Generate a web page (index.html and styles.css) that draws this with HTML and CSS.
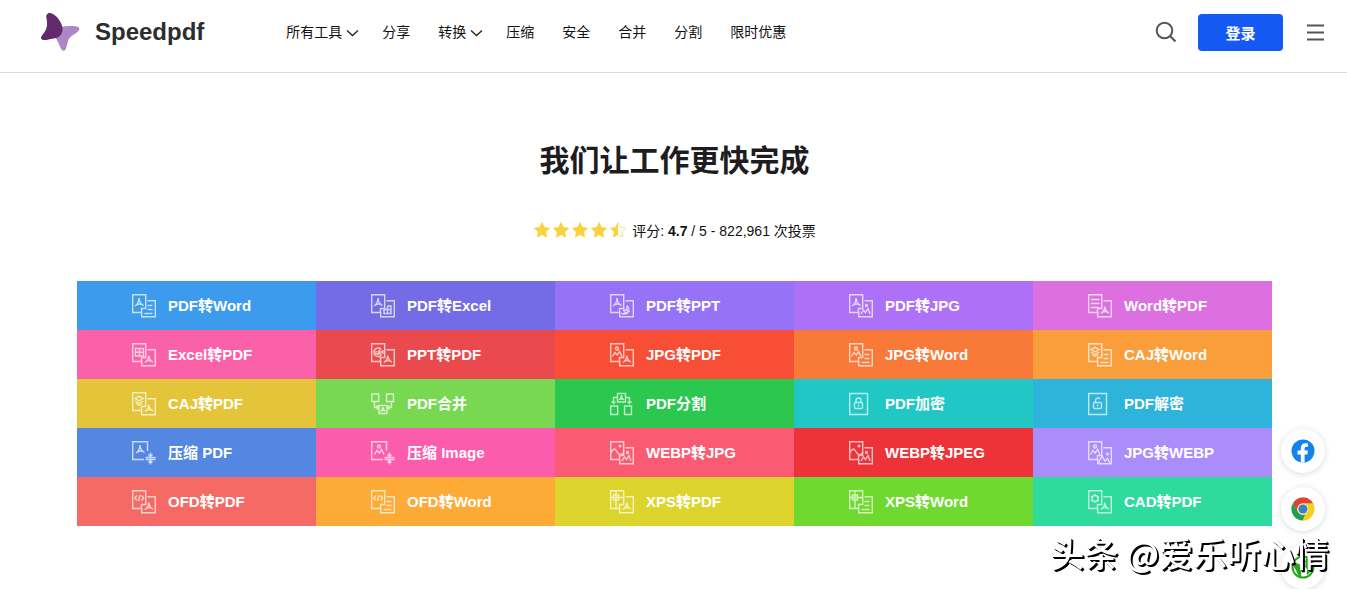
FILE: index.html
```html
<!DOCTYPE html>
<html lang="zh-CN">
<head>
  <meta charset="UTF-8">
  <meta name="viewport" content="width=device-width, initial-scale=1.0">
  <title>Speedpdf</title>
  <link rel="stylesheet" href="styles.css">
</head>
<body>

  <!-- Icon parts shared by the tool tiles -->
  <svg class="sprite" aria-hidden="true">
    <symbol id="front" viewBox="0 0 24 24"><path d="M9 18.500H.7V.7h13V6.500M13.700 6v8.500H9.500v4"/></symbol>
    <symbol id="back" viewBox="0 0 24 24"><path d="M15.500 6.700h7.800v16H9.700v-5"/></symbol>
    <symbol id="pdf-front" viewBox="0 0 24 24"><path d="M7 4C6.800 7.500 5.500 10.500 3 12M7 4c.4 3.500 2 6.500 4.500 7.500M4.500 11c1.800-1.200 4-1.300 6-.5"/></symbol>
    <symbol id="pdf-back" viewBox="0 0 24 24"><path d="M16.800 12.500c-.2 3-1.600 5.500-4 7M16.800 12.500c.4 3 1.800 5.500 4 6.500M14 18.300c1.800-1 4-1 5.500-.3"/></symbol>
    <symbol id="doc-front" viewBox="0 0 24 24"><path d="M3 5.500h8.500M3 9.500h8.500M3 13.500h8.500"/></symbol>
    <symbol id="doc-back" viewBox="0 0 24 24"><path d="M15.500 11.500h5M15.500 15.500h5M12.500 19.500h8"/></symbol>
    <symbol id="xls-front" viewBox="0 0 24 24"><path d="M3.500 5.500h8v7.500h-8zM7.500 5.500V13M3.500 9.300h8"/></symbol>
    <symbol id="xls-back" viewBox="0 0 24 24"><path d="M16.500 12h3.500v7.500h-7v-4h7M16.500 12v7.500"/></symbol>
    <symbol id="ppt-front" viewBox="0 0 24 24"><path d="M10 6a4.300 4.300 0 1 0 .5 6M10.500 12 7 9l3-3M8 9h4M5.500 8a1.800 1.800 0 1 0 2.500 2.500M12 7v4"/></symbol>
    <symbol id="ppt-back" viewBox="0 0 24 24"><path d="M17 11.500a4.500 4.500 0 1 1-6 7.500M17 12v4h-4M17 16l3 2M13 19.500h5M14 16.500c0 2 2 3 4 1"/></symbol>
    <symbol id="img-front" viewBox="0 0 24 24"><circle cx="7" cy="5.500" r="1.500"/><path d="M2.500 13.500 5 9.500l2.300 2.500 2.200-3.500 2.500 5"/></symbol>
    <symbol id="img-back" viewBox="0 0 24 24"><circle cx="17.500" cy="11.500" r="1"/><path d="m12 20 2.500-4 2 2.500 2.500-4 2 5.500"/></symbol>
    <symbol id="webp-front" viewBox="0 0 24 24"><circle cx="10" cy="5" r=".8"/><path d="M.5 13c2-5 4-6.500 6-3s4 5 7 2"/></symbol>
    <symbol id="webp-back" viewBox="0 0 24 24"><circle cx="19.500" cy="13" r=".8"/><path d="m10.500 22 3.500-7 3 5 2.500-2.500 2.500 4.500"/></symbol>
    <symbol id="caj-front" viewBox="0 0 24 24"><path d="m3 6.500 4-2.200 4.200 2.200L7 8.800zM3 9l4 2.300L11.200 9M4 11.500l3 1.800 3.500-1.800"/></symbol>
    <symbol id="ofd-front" viewBox="0 0 24 24"><path d="M5 5.500 2.800 8 5 10.500M9.500 5.500 11.700 8l-2.200 2.500M8 5l-1.500 6"/></symbol>
    <symbol id="xps-front" viewBox="0 0 24 24"><path d="M6 .5v18M.5 7.500h13M3.500 5h5v5h-5z"/></symbol>
    <symbol id="cad-front" viewBox="0 0 24 24"><circle cx="7" cy="8.500" r="3"/><path d="M7 4v2M7 11v2M3 6.300l2 1M9 9.800l2 1M3 10.800l2-1M9 7.300l2-1"/></symbol>
    <symbol id="compress" viewBox="0 0 24 24"><path d="M15.500 10V.7H.7v17.800H12M13.500 16.500h10M13.500 18.500h10M18.500 11.500v4M16.500 13.500l2 2 2-2M18.500 23.500v-4M16.500 21.500l2-2 2 2"/></symbol>
    <symbol id="merge" viewBox="0 0 24 24"><path d="M.7 2h7v7.500h-7zM15.500 2h7v7.500h-7zM8 13.500h8v8H8zM3.500 10v5.500H7M5.500 13.500l2 2-2 2M20.500 10v5.500H17M18.500 13.500l-2 2 2 2M12 15c0 2-1 3.500-2.500 4.500M12 15c0 2 1 3.500 2.500 4.500M10.500 18.500h3"/></symbol>
    <symbol id="split" viewBox="0 0 24 24"><path d="M7.500 1.500h8V10h-8zM.7 14h7v8.500h-7zM14.500 14h7v8.500h-7zM7 5.500H3.500V12M1.500 9.500l2 2 2-2M16 5.500h3.500V12M17.500 9.500l2 2 2-2M11.500 3c0 2-1 4-2.500 5M11.500 3c0 2 1 4 2.500 5M10 7h3"/></symbol>
    <symbol id="lock" viewBox="0 0 24 24"><path d="M.7 1.500h17.800v21H.7z"/><rect x="5.500" y="10.500" width="8" height="6" rx="1"/><path d="M7 10.500V8.500a2.500 2.500 0 0 1 5 0v2M9.500 12.500v2"/></symbol>
    <symbol id="unlock" viewBox="0 0 24 24"><path d="M.7 1.500h17.800v21H.7z"/><rect x="5.500" y="10.500" width="8" height="6" rx="1"/><path d="M7.500 10.500v-2A2.500 2.500 0 0 1 12 7M9.500 12.500v2"/></symbol>
    <symbol id="star" viewBox="0 0 18 18"><path d="m9 .8 2.500 5.300 5.800.8-4.200 4.100 1 5.800L9 14l-5.100 2.800 1-5.800L.7 6.900l5.800-.8z"/></symbol>
    <symbol id="chevron" viewBox="0 0 13 8"><path d="m1 1.500 5.500 5 5.500-5"/></symbol>
  </svg>

  <header class="header">
    <a class="logo" href="#">
      <svg class="logo-mark" viewBox="0 0 40 40" aria-hidden="true">
        <path fill="#ae86c6" d="M15 17c5-3 15-3.500 21.500-2.500 3.500.7 3.500 3 1.500 5-4 3.500-8.500 4.500-10 9.500l-2 7.500c-1 3-3.500 3-5 0C19 33 17.500 28 15 25z"/>
        <path fill="#612a6b" d="M6.500 3c1.500-3 5-2.500 8 0 5 4 8.500 10 8 15.500-.5 4.500-4 7.500-9 8-4.500.5-7 2-10 1.500-3-.5-3-2.500-1.500-4.500 4-5 5.500-8 5-14C6.800 7 5.800 4.500 6.500 3z"/>
      </svg>
      <span>Speedpdf</span>
    </a>
    <nav class="nav">
      <a href="#">所有工具<svg class="chevron"><use href="#chevron"/></svg></a>
      <a href="#">分享</a>
      <a href="#">转换<svg class="chevron"><use href="#chevron"/></svg></a>
      <a href="#">压缩</a>
      <a href="#">安全</a>
      <a href="#">合并</a>
      <a href="#">分割</a>
      <a href="#">限时优惠</a>
    </nav>
    <div class="actions">
      <button class="icon-btn" aria-label="搜索">
        <svg width="22" height="22" viewBox="0 0 22 22"><circle cx="9.500" cy="9.500" r="7.800"/><path d="m15.200 15.200 5.300 5.300"/></svg>
      </button>
      <button class="login">登录</button>
      <button class="icon-btn" aria-label="菜单">
        <svg width="17" height="17" viewBox="0 0 17 17"><path d="M0 1.500h17M0 8.500h17M0 15.500h17"/></svg>
      </button>
    </div>
  </header>

  <main class="main">
    <h1>我们让工作更快完成</h1>

    <div class="rating">
      <span class="stars">
        <svg><use href="#star"/></svg>
        <svg><use href="#star"/></svg>
        <svg><use href="#star"/></svg>
        <svg><use href="#star"/></svg>
        <svg viewBox="0 0 18 18"><path d="M9 .8V14l-5.100 2.800 1-5.800L.7 6.900l5.800-.8z"/><path class="half" d="m9.500 2 2 4.300 5 .8-3.700 3.800.8 5L9.500 14"/></svg>
      </span>
      <span>评分: <strong>4.7</strong> / 5 - 822,961 次投票</span>
    </div>

    <div class="tools">
      <a class="tool blue" href="#"><svg><use href="#front"/><use href="#back"/><use href="#pdf-front"/><use href="#doc-back"/></svg>PDF转Word</a>
      <a class="tool indigo" href="#"><svg><use href="#front"/><use href="#back"/><use href="#pdf-front"/><use href="#xls-back"/></svg>PDF转Excel</a>
      <a class="tool violet" href="#"><svg><use href="#front"/><use href="#back"/><use href="#pdf-front"/><use href="#ppt-back"/></svg>PDF转PPT</a>
      <a class="tool purple" href="#"><svg><use href="#front"/><use href="#back"/><use href="#pdf-front"/><use href="#img-back"/></svg>PDF转JPG</a>
      <a class="tool orchid" href="#"><svg><use href="#front"/><use href="#back"/><use href="#doc-front"/><use href="#pdf-back"/></svg>Word转PDF</a>

      <a class="tool pink" href="#"><svg><use href="#front"/><use href="#back"/><use href="#xls-front"/><use href="#pdf-back"/></svg>Excel转PDF</a>
      <a class="tool crimson" href="#"><svg><use href="#front"/><use href="#back"/><use href="#ppt-front"/><use href="#pdf-back"/></svg>PPT转PDF</a>
      <a class="tool vermilion" href="#"><svg><use href="#front"/><use href="#back"/><use href="#img-front"/><use href="#pdf-back"/></svg>JPG转PDF</a>
      <a class="tool orange" href="#"><svg><use href="#front"/><use href="#back"/><use href="#img-front"/><use href="#doc-back"/></svg>JPG转Word</a>
      <a class="tool apricot" href="#"><svg><use href="#front"/><use href="#back"/><use href="#caj-front"/><use href="#doc-back"/></svg>CAJ转Word</a>

      <a class="tool mustard" href="#"><svg><use href="#front"/><use href="#back"/><use href="#caj-front"/><use href="#pdf-back"/></svg>CAJ转PDF</a>
      <a class="tool light-green" href="#"><svg><use href="#merge"/></svg>PDF合并</a>
      <a class="tool green" href="#"><svg><use href="#split"/></svg>PDF分割</a>
      <a class="tool teal" href="#"><svg><use href="#lock"/></svg>PDF加密</a>
      <a class="tool sky" href="#"><svg><use href="#unlock"/></svg>PDF解密</a>

      <a class="tool steel" href="#"><svg><use href="#compress"/><use href="#pdf-front" x="1"/></svg>压缩 PDF</a>
      <a class="tool hot-pink" href="#"><svg><use href="#compress"/><use href="#img-front" x="1"/></svg>压缩 Image</a>
      <a class="tool rose" href="#"><svg><use href="#front"/><use href="#back"/><use href="#webp-front"/><use href="#img-back"/></svg>WEBP转JPG</a>
      <a class="tool red" href="#"><svg><use href="#front"/><use href="#back"/><use href="#webp-front"/><use href="#img-back"/></svg>WEBP转JPEG</a>
      <a class="tool lavender" href="#"><svg><use href="#front"/><use href="#back"/><use href="#img-front"/><use href="#webp-back"/></svg>JPG转WEBP</a>

      <a class="tool coral" href="#"><svg><use href="#front"/><use href="#back"/><use href="#ofd-front"/><use href="#pdf-back"/></svg>OFD转PDF</a>
      <a class="tool amber" href="#"><svg><use href="#front"/><use href="#back"/><use href="#ofd-front"/><use href="#doc-back"/></svg>OFD转Word</a>
      <a class="tool yellow" href="#"><svg><use href="#front"/><use href="#back"/><use href="#xps-front"/><use href="#pdf-back"/></svg>XPS转PDF</a>
      <a class="tool lime" href="#"><svg><use href="#front"/><use href="#back"/><use href="#xps-front"/><use href="#doc-back"/></svg>XPS转Word</a>
      <a class="tool mint" href="#"><svg><use href="#front"/><use href="#back"/><use href="#cad-front"/><use href="#pdf-back"/></svg>CAD转PDF</a>
    </div>
  </main>

  <!-- Floating share buttons -->
  <div class="share">
    <a href="#" aria-label="Facebook">
      <svg viewBox="0 0 24 24"><circle cx="12" cy="12" r="11.500" fill="#1383ea"/><path fill="#fff" d="M9.800 23.500v-8H6.500V11.500h3.300V9.300C9.800 6 11.600 4.200 14.500 4.200c1.200 0 2.400.2 2.400.2v3.300h-1.400c-1.500 0-1.900.9-1.900 1.900v1.900h3.400l-.6 4h-2.800v8z"/></svg>
    </a>
    <a href="#" aria-label="Chrome">
      <svg viewBox="0 0 24 24"><circle cx="12" cy="12" r="11.500" fill="#f9cf1e"/><path fill="#dc4437" d="M2 6.200A11.500 11.500 0 0 1 22 6.200H12a6 6 0 0 0-5.200 8.800z"/><path fill="#1d9d59" d="M2 6.200 6.800 15A6 6 0 0 0 14 17.700L11.500 23.500A11.500 11.500 0 0 1 2 6.200z"/><circle cx="12" cy="12" r="5.500" fill="#e8eef4"/><circle cx="12" cy="12" r="4.600" fill="#4180bd"/></svg>
    </a>
    <a href="#" aria-label="Web">
      <svg viewBox="0 0 24 24"><circle cx="12" cy="12" r="10.500" fill="#fff" stroke="#25a61c" stroke-width="2"/><path fill="#25a61c" d="M2 8c3-1 5 1 8 2 3 1 3 3 1 5s0 4-1 7c-3-1-4-4-5-7-1-2-3-3-3-7zM15 3c3 0 6 4 7 8-1 4-3 7-6 9-1-3 1-5-1-7-2-3 1-4-1-6z"/></svg>
    </a>
  </div>

  <div class="watermark">头条 @爱乐听心情</div>

</body>
</html>
```

FILE: styles.css
```css
* {
  box-sizing: border-box;
}

body {
  margin: 0;
  font-family: "Liberation Sans", "Noto Sans CJK SC", sans-serif;
  font-size: 14px;
  color: #111;
  background-color: #fff;
}

a {
  color: inherit;
  text-decoration: none;
}

button {
  font-family: inherit;
  border: none;
  cursor: pointer;
}

.sprite {
  display: none;
}

/* Header */
.header {
  display: flex;
  align-items: center;
  height: 73px;
  padding: 0 23px 8px 40px;
  border-bottom: 1px solid #dcdcdc;
}

.logo {
  display: flex;
  align-items: center;
  gap: 15px;
  font-size: 24px;
  font-weight: bold;
  color: #2d2d2d;
}

.logo-mark {
  width: 40px;
  height: 40px;
}

.nav {
  display: flex;
  gap: 28px;
  margin-left: 82px;
  padding-bottom: 2px;
}

.nav a {
  white-space: nowrap;
}

.chevron {
  width: 13px;
  height: 8px;
  margin: 0 -5px 0 4px;
  fill: none;
  stroke: #222;
  stroke-width: 1.3;
}

.actions {
  display: flex;
  align-items: center;
  margin-left: auto;
}

.icon-btn {
  display: flex;
  padding: 0;
  background: none;
}

.icon-btn svg {
  fill: none;
  stroke: #555;
  stroke-width: 2;
}

.login {
  width: 85px;
  height: 37px;
  margin: 0 24px 0 21px;
  font-size: 15px;
  font-weight: bold;
  color: #fff;
  background-color: #145af2;
  border-radius: 4px;
}

/* Main */
.main {
  padding: 64px 75px 60px 77px;
}

h1 {
  margin: 0;
  font-size: 30px;
  line-height: 48px;
  text-align: center;
  color: #1d1d1f;
}

.rating {
  display: flex;
  align-items: center;
  justify-content: center;
  gap: 5px;
  height: 24px;
  margin: 33px 0 39px;
}

.stars {
  display: flex;
  gap: 1px;
}

.stars svg {
  width: 18px;
  height: 18px;
  fill: #f7d33f;
}

.stars .half {
  fill: none;
  stroke: #f9e08a;
}

.tools {
  display: grid;
  grid-template-columns: repeat(5, 1fr);
}

.tool {
  display: flex;
  align-items: center;
  gap: 12px;
  height: 49px;
  padding: 0 0 2px 55px;
  font-size: 15px;
  font-weight: bold;
  color: #fff;
  white-space: nowrap;
}

.tool svg {
  width: 24px;
  height: 24px;
  margin-top: 3px;
  fill: none;
  stroke: #fff;
  stroke-width: 1.4;
  opacity: 0.7;
}

.blue { background-color: #3d9bed; }
.indigo { background-color: #746ce6; }
.violet { background-color: #9672f7; }
.purple { background-color: #ad71f7; }
.orchid { background-color: #dc70e0; }
.pink { background-color: #fb61a8; }
.crimson { background-color: #ea4a4d; }
.vermilion { background-color: #f84e35; }
.orange { background-color: #f97938; }
.apricot { background-color: #fa9e3c; }
.mustard { background-color: #e4c53a; }
.light-green { background-color: #78d852; }
.green { background-color: #2bc74f; }
.teal { background-color: #20c7c5; }
.sky { background-color: #2eb4da; }
.steel { background-color: #5487e1; }
.hot-pink { background-color: #fb5cab; }
.rose { background-color: #fa5b73; }
.red { background-color: #ed3338; }
.lavender { background-color: #ab8cfb; }
.coral { background-color: #f56a64; }
.amber { background-color: #fdaa36; }
.yellow { background-color: #ddd52e; }
.lime { background-color: #6fd92f; }
.mint { background-color: #2eda9d; }

/* Share buttons */
.share {
  position: fixed;
  right: 22px;
  bottom: 0;
  display: flex;
  flex-direction: column;
  gap: 14px;
}

.share a {
  display: flex;
  align-items: center;
  justify-content: center;
  width: 44px;
  height: 44px;
  background-color: #fff;
  border-radius: 50%;
  box-shadow: 0 1px 6px rgba(0, 0, 0, 0.15);
}

.share svg {
  width: 24px;
  height: 24px;
}

.watermark {
  position: fixed;
  right: 18px;
  bottom: 16px;
  font-family: "Noto Sans CJK SC", sans-serif;
  font-size: 34px;
  font-weight: 500;
  line-height: 40px;
  color: #fff;
  text-shadow: 1px 1px 0 #000, 2px 2px 0 #000;
  white-space: nowrap;
}
```
